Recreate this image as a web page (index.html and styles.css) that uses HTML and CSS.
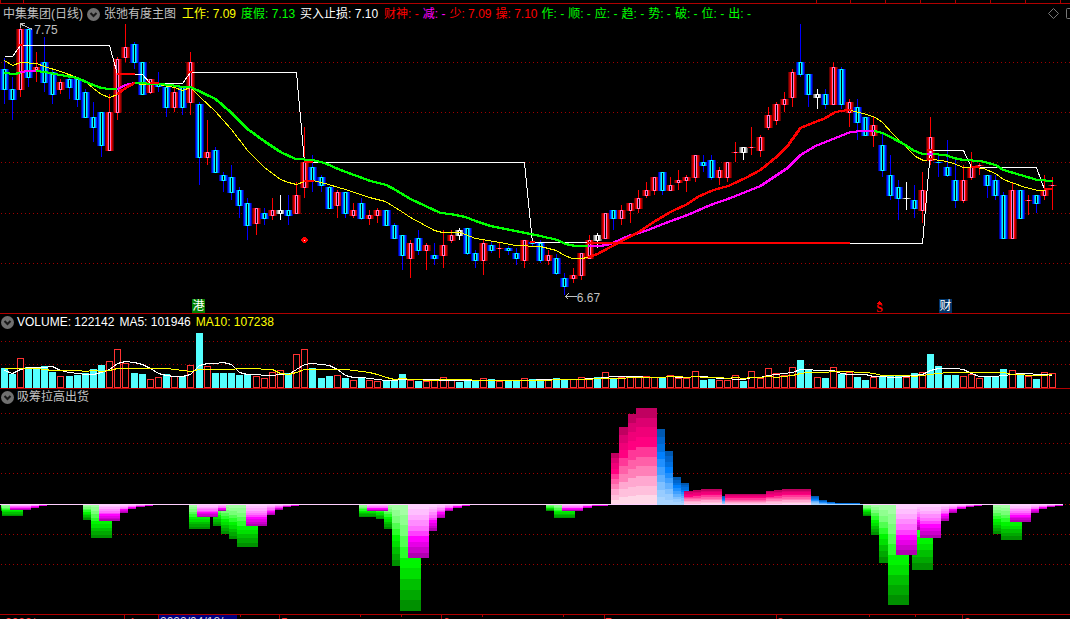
FILE: index.html
```html
<!DOCTYPE html>
<html lang="zh-CN">
<head>
<meta charset="utf-8">
<title>中集集团(日线)</title>
<link rel="stylesheet" href="styles.css">
</head>
<body>
<main class="terminal">
  <div class="ruler"><svg class="plot" id="ruler" viewBox="0 0 1070 3" preserveAspectRatio="none"></svg></div>

  <section class="panel">
    <svg class="plot" id="price" viewBox="0 4 1070 309" preserveAspectRatio="none"></svg>
    <header class="legend legend-main">
      <div class="group">
        <span class="stock">中集集团(日线)</span>
        <button class="toggle" aria-label="主图指标"><svg viewBox="0 0 13 13"><circle cx="6.500" cy="6.500" r="6.500"/><path d="M3.500 5l3 3 3-3"/></svg></button>
        <span class="title">张弛有度主图</span>
      </div>
      <div class="group wide">
        <span class="yellow">工作: 7.09</span><span class="green">度假: 7.13</span><span class="white">买入止损: 7.10</span>
      </div>
      <div class="group">
        <span class="red">财神: -</span><span class="magenta">减: -</span><span class="red">少: 7.09</span><span class="red">操: 7.10</span><span class="green">作: -</span><span class="green">顺: -</span><span class="green">应: -</span><span class="green">趋: -</span><span class="green">势: -</span><span class="green">破: -</span><span class="green">位: -</span><span class="green">出: -</span>
      </div>
    </header>
    <div class="tools">
      <button class="tool" aria-label="标记"><svg viewBox="0 0 11 11"><path d="M5.500 .5l5 5-5 5-5-5z"/></svg></button>
      <button class="tool" aria-label="窗口"><svg viewBox="0 0 11 11"><rect x=".5" y=".5" width="10" height="10" rx="1"/></svg></button>
    </div>
    <span class="price high">7.75</span>
    <span class="price low">6.67</span>
    <span class="badge hk">港</span>
    <span class="badge fin">财</span>
    <span class="dividend">S</span>
  </section>

  <section class="panel">
    <svg class="plot" id="volume" viewBox="0 314 1070 74" preserveAspectRatio="none"></svg>
    <header class="legend">
      <button class="toggle" aria-label="成交量指标"><svg viewBox="0 0 13 13"><circle cx="6.500" cy="6.500" r="6.500"/><path d="M3.500 5l3 3 3-3"/></svg></button>
      <div class="group wide"><span class="white">VOLUME: 122142</span><span class="white">MA5: 101946</span><span class="yellow">MA10: 107238</span></div>
    </header>
  </section>

  <section class="panel">
    <svg class="plot" id="flow" viewBox="0 389 1070 225" preserveAspectRatio="none"></svg>
    <header class="legend">
      <button class="toggle" aria-label="副图指标"><svg viewBox="0 0 13 13"><circle cx="6.500" cy="6.500" r="6.500"/><path d="M3.500 5l3 3 3-3"/></svg></button>
      <span class="title">吸筹拉高出货</span>
    </header>
  </section>

  <footer class="axis" id="axis">
    <svg class="plot" id="ticks" viewBox="0 615 1070 4" preserveAspectRatio="none"></svg>
  </footer>
</main>
<script src="chart.js"></script>
</body>
</html>
```
FILE: styles.css
```css
* {
  box-sizing: border-box;
}

body {
  margin: 0;
  background: #000;
  color: #c0c0c0;
  font: 12px/16px "Liberation Sans", "Noto Sans CJK SC", sans-serif;
}

.terminal {
  display: grid;
  grid-template-rows: 4px 310fr 75fr 226fr 4px;
  height: 100vh;
  overflow: hidden;
}

.ruler,
.panel {
  position: relative;
  min-height: 0;
  border-bottom: 1px solid #b00000;
  overflow: hidden;
}

.plot {
  display: block;
  width: 100%;
  height: 100%;
  shape-rendering: crispEdges;
}

.legend {
  position: absolute;
  top: 0;
  left: 1px;
  display: flex;
  align-items: center;
  gap: 3px;
  height: 16px;
  white-space: nowrap;
}

.legend-main {
  left: 3px;
  gap: 6px;
  height: 20px;
}

.group {
  display: flex;
  align-items: center;
  gap: 4px;
}

.group.wide {
  gap: 5px;
}

button {
  padding: 0;
  border: 0;
  background: none;
}

.toggle {
  width: 13px;
  height: 13px;
}

.toggle svg,
.tool svg {
  display: block;
  width: 100%;
  height: 100%;
}

.toggle circle {
  fill: #707070;
}

.toggle path {
  fill: none;
  stroke: #181818;
  stroke-width: 2;
}

.tools {
  position: absolute;
  top: 4px;
  right: -7px;
  display: flex;
  gap: 7px;
}

.tool {
  width: 11px;
  height: 11px;
}

.tool path,
.tool rect {
  fill: none;
  stroke: #787878;
}

.white { color: #fff; }
.yellow { color: #ff0; }
.green { color: #0f0; }
.red { color: #f00; }
.magenta { color: #f0f; }

.price,
.badge,
.dividend {
  position: absolute;
}

.price.high {
  left: 3.2%;
  top: 18px;
}

.price.low {
  left: 53.9%;
  bottom: 7px;
}

.badge {
  bottom: 0;
  width: 13px;
  height: 14px;
  color: #fff;
  line-height: 14px;
  text-align: center;
}

.badge.hk {
  left: 17.95%;
  background: #008000;
}

.badge.fin {
  left: 87.75%;
  background: #003468;
}

.dividend {
  left: 81.9%;
  bottom: -1px;
  color: #f00;
  font: bold 12px/12px "Liberation Serif", serif;
}

.axis {
  position: relative;
  overflow: hidden;
}

.date {
  position: absolute;
  top: 0;
  color: #f33;
  line-height: 16px;
}

.date.current {
  top: -1px;
  width: 78px;
  padding-left: 1px;
  background: #000080;
  color: #d8d8d8;
}
```
FILE: chart.js
```js
const NS = "http://www.w3.org/2000/svg";
const byId = (id) => document.getElementById(id);

function add(svg, name, attrs) {
  const el = document.createElementNS(NS, name);
  for (const key in attrs) el.setAttribute(key, attrs[key]);
  svg.appendChild(el);
}
function rect(svg, x, y, w, h, fill) {
  add(svg, "rect", { x, y, width: w, height: h, fill });
}
/* two-pixel lines are drawn with a square pen: a second pass one pixel to the right */
function line(svg, stroke, width, points) {
  const off = width % 2 ? 0.5 : 0;
  for (let pass = 0; pass < width; pass++) {
    const list = points.trim().split(/\s+/).map((p) => {
      const [x, y] = p.split(",").map(Number);
      return (x + off + pass) + "," + (y + off);
    });
    add(svg, "polyline", { points: list.join(" "), fill: "none", stroke, "stroke-width": width });
  }
}
function grid(svg, rows, from = 1) {
  for (const y of rows) {
    add(svg, "line", { x1: from, x2: 1070, y1: y + 0.5, y2: y + 0.5, stroke: "#a00000", "stroke-dasharray": "1 3" });
  }
}
const xOf = (i) => Math.floor(4 + i * 8.13);

/* top ruler */
for (const x of [0, 23, 816, 850, 885, 920, 955, 990, 1025, 1060]) rect(byId("ruler"), x, 0, 1, 3, "#b00000");

/* candles: kind, high, body top, body bottom, low */
const candles = `b58,69,90,104 b77,89,100,120 r27,29,90,97 b28,29,78,87 r52,67,70,82 b37,62,83,92 b70,72,95,104 r79,82,90,94
b78,79,88,99 b77,79,100,107 b89,92,118,118 b102,117,128,142 b112,112,146,157 r94,112,151,151 r57,59,113,120 r24,47,58,62
b42,44,63,69 b62,62,95,95 r79,79,93,94 b72,84,87,92 b87,87,108,117 r88,92,108,112 b86,86,108,115 r52,62,103,115
b102,104,158,185 r120,152,158,165 b147,150,173,173 b172,175,181,192 b165,177,193,200 b187,190,206,218 b198,203,226,240
r208,208,224,235 b208,213,219,225 r198,210,216,220 w195,210,214,220 b195,210,216,225 r182,195,214,214 r127,162,188,198
b155,167,181,192 b175,177,186,192 b186,187,209,209 r190,192,206,218 b192,192,214,218 r203,210,216,218 b198,203,219,220
r210,215,219,225 r208,210,216,223 b210,210,226,226 b223,225,239,239 b235,235,256,270 r240,243,259,278 b230,238,251,255
r243,245,251,270 b243,255,259,265 r230,245,256,268 r230,235,241,243 w228,230,236,240 b228,228,254,255 b250,253,261,268
r240,243,261,275 b242,245,251,253 r243,248,249,258 b246,248,251,255 b248,253,259,265 r240,240,261,268 b238,242,244,247
b240,243,261,263 r250,255,261,265 b254,258,274,275 b273,278,287,295 r268,275,279,283 r253,253,276,280 r235,240,259,259
w233,235,241,248 r213,213,239,239 b210,210,219,230 r205,210,219,225 r203,203,211,223 r190,198,209,213 r182,190,196,198
r177,177,191,195 b172,172,191,195 r177,185,191,191 r170,180,183,190 r175,177,181,192 r155,155,178,182 b155,162,166,172
b155,160,178,180 r167,170,178,185 r162,162,178,182 r142,152,153,162 w147,147,153,160 r127,147,148,155 r135,137,151,157
r107,115,128,130 r102,104,121,125 r92,99,105,112 r69,72,98,107 b24,62,75,77 b74,74,95,107 w89,94,98,109 b89,94,105,109
r62,67,105,105 b67,69,105,109 r99,102,113,127 b99,107,123,140 b117,117,136,136 r117,125,136,147 b134,145,171,177
b155,175,196,200 b180,187,199,220 w182,198,199,210 b185,200,209,218 r172,190,211,223 r117,137,161,165 b153,162,163,177
b140,167,176,177 b158,180,201,208 r165,180,201,203 r152,167,178,180 r163,165,166,175 b175,175,186,198 b175,180,196,200
b192,195,239,239 r183,190,239,239 b190,190,219,219 r195,200,201,215 b195,195,204,213 r175,190,196,200 r177,185,186,210`.split(/\s+/);
const tones = {
  r: ["#600000", "#a80000", "#ff0000", "#ff78c8"],
  b: ["#0000a0", "#0020ff", "#0090ff", "#00ffff"],
  w: ["#606060", "#a0a0a0", "#d8d8d8", "#ffffff"]
};
const wicks = { r: "#ff0000", b: "#0000ff", w: "#ffffff" };
const price = byId("price");
grid(price, [62, 112, 162, 213, 263]);
candles.forEach((text, i) => {
  const kind = text[0];
  const [high, top, bottom, low] = text.slice(1).split(",").map(Number);
  const x = xOf(i);
  rect(price, x, high, 1, low - high, wicks[kind]);
  tones[kind].forEach((tone, n) => rect(price, x - 4 + n, top, 9 - n * 2, bottom - top, tone));
  if (bottom - top > 2) rect(price, x, top + 1, 1, bottom - top - 2, "#000");
});

/* trend and stop lines */
const RED = "#ff0000", GREEN = "#00ff00", PINK = "#ff00ff", YELLOW = "#ffff00";
line(price, "#fff", 1, "4,56 12,56 20,45 109,45 117,74 142,74 150,83 182,83 190,72 296,72 304,162 524,162 532,242 590,242 850,243 922,243 930,150 963,150 971,167 1036,167 1044,189");
line(price, YELLOW, 1, "4,60 12,65 20,62 36,63 44,66 60,71 77,77 85,81 93,88 101,94 109,97 117,94");
line(price, YELLOW, 1, "134,83 142,84 158,84 174,87 182,90 190,87 199,96 215,111 231,129 247,150 264,167 280,179 288,182 296,184 304,181");
line(price, YELLOW, 1, "312,180 321,182 345,189 369,197 385,201 401,211 410,217 434,230 442,232 460,232 475,238 500,242 515,245 540,246 556,250 564,255 572,258 582,258 590,256");
line(price, YELLOW, 1, "850,110 863,113 875,117 882,122 892,133 907,148 915,156 923,160 930,159 942,160 953,163 963,167 973,167 983,168 995,173 1003,179 1022,186 1037,190 1044,190");
line(price, GREEN, 2, "4,73 13,74 20,73");
line(price, PINK, 2, "20,72 28,71 37,71");
line(price, GREEN, 2, "36,71 44,72 60,75 77,78 90,84 101,88 109,89 117,89");
line(price, PINK, 2, "117,89 125,85 134,83");
line(price, GREEN, 2, "134,83 158,84 170,85 182,87 190,87 215,99 230,112 247,129 265,142 280,152 295,159 312,160 324,163 340,170 370,181 386,185 395,190 410,199 425,206 440,213 450,214 465,217 475,221 490,226 520,232 540,236 557,240 565,244 575,246 590,246");
line(price, PINK, 2, "588,246 600,246 610,244 628,236 645,231 665,223 687,215 710,205 730,198 760,186 787,168 800,155 815,146 830,140 850,132 863,131 875,131");
line(price, GREEN, 2, "874,131 882,133 890,137 905,145 912,150 922,154 930,154 945,155 953,158 963,160 980,161 995,165 1003,170 1020,175 1037,180 1052,181");
line(price, RED, 2, "117,94 125,88 134,83");
line(price, RED, 2, "304,181 313,181");
line(price, RED, 2, "588,257 597,254 610,247 627,238 640,231 653,222 670,212 687,204 697,197 713,190 728,186 747,177 760,170 777,156 787,146 800,128 817,121 823,119 835,112 847,110 850,110");
for (const [x, y, w] of [[18, 44, 5], [117, 73, 18], [150, 82, 9], [188, 71, 4], [304, 161, 9], [530, 241, 5], [587, 242, 263], [927, 149, 6], [927, 158, 6], [971, 166, 9], [1044, 188, 9]]) {
  rect(price, x, y, w, 2, RED);
}
rect(price, 927, 153, 6, 2, PINK);

/* extreme pointers and event marks */
line(price, "#c0c0c0", 1, "24,23 20,23 20,27");
line(price, "#c0c0c0", 1, "21,24 32,29");
line(price, "#c0c0c0", 1, "565,296 576,296");
line(price, "#c0c0c0", 1, "568,293 565,296 568,299");
add(price, "path", { d: "M303 237h3v1h1v1h1v2h-1v1h-1v1h-3v-1h-1v-1h-1v-2h1v-1h1z", fill: RED });
rect(price, 304, 240, 1, 1, "#fff");
add(price, "path", { d: "M879 301h1v1h1v1h1v1h-5v-1h1v-1h1z", fill: RED });

/* volume: kind and bar top */
const volumes = `b368 b374 r358 b367 b369 b366 b372 r376 b376 b375 b373 b369 b365 r361 r349 r363 b373 b374 r379 r377 b374 r376 b376 r365 b333 r366
b373 b373 b373 b375 b374 r376 r378 r372 r370 b373 r354 r349 b368 b378 b376 r375 b378 r380 b378 r380 r381 b380 b380 b374 r380 b381
r381 r380 r377 r379 b382 b380 b381 r378 b379 r381 b380 b380 r378 b379 b379 r380 b378 b379 r379 r377 r378 b377 r372 b378 r377 r377
r377 r376 r377 b377 r375 r378 r378 r371 b380 b379 r380 r380 r375 b381 r371 r378 r368 r373 r375 r367 b360 b369 r377 b378 r367 b374
r372 b377 b380 r377 b376 b375 b375 r377 b373 r372 b354 b366 b375 b375 r376 r374 r378 b376 b376 b369 r370 b375 r376 b379 r372 r373`.split(/\s+/);
const volume = byId("volume");
grid(volume, [341, 364]);
const tops = volumes.map((v) => +v.slice(1));
volumes.forEach((v, i) => {
  const x = xOf(i) - 3, y = tops[i];
  if (v[0] === "b") rect(volume, x, y, 7, 388 - y, "#54ffff");
  else add(volume, "rect", { x: x + 0.5, y: y + 0.5, width: 6, height: 387 - y, fill: "#000", stroke: "#ff3232" });
});
function average(period, lead) {
  const points = [lead];
  for (let i = period - 1; i < tops.length; i++) {
    const sum = tops.slice(i - period + 1, i + 1).reduce((a, b) => a + b, 0);
    points.push(xOf(i) + "," + Math.round(sum / period));
  }
  return points.join(" ");
}
line(volume, "#fff", 1, average(5, "4,370 12,373 20,369 28,367"));
line(volume, YELLOW, 1, average(10, "4,368 36,368 52,370 69,370"));

/* flow: ramp, left, right, tip */
const ramps = {
  g: ["#a5ffa5", "#90ff90", "#78ff78", "#50ff50", "#28ff28", "#00f500", "#00e000", "#00c000", "#00a800", "#009000"],
  m: ["#ffd0ff", "#ffbfff", "#ffaaff", "#ff8cff", "#ff70ff", "#ff40ff", "#ff00ff", "#e600e6", "#cc00cc", "#b000b0"],
  p: ["#ffd8e8", "#ffc0dc", "#ffa8d0", "#ff80b8", "#ff60a8", "#ff3898", "#ff0080", "#f00078", "#dc0070", "#c00060"],
  c: ["#a8d4ff", "#98ccff", "#80c0ff", "#60b0ff", "#40a0ff", "#2090ff", "#0080ff", "#0070e0", "#0064cc", "#0058b0"]
};
const columns = `g1,10,511 g2,23,516 m10,31,510 m31,39,508 m39,47,506
g83,91,520 g91,112,538 m99,120,521 m120,128,513 m128,136,509 m136,145,507 m145,153,506
g189,210,529 g213,221,526 g221,229,534 m197,218,517 m218,226,511 g229,237,539 g237,258,547 m246,267,526 m267,275,515 m275,283,510 m283,291,507 m291,299,506
g359,376,517 g376,384,519 g384,392,529 m367,388,511 g392,400,566 g400,421,611 m408,429,558 m429,437,531 m437,445,518 m445,453,511 m453,462,508 m462,470,506
g546,554,511 g554,575,518 m562,583,511 m583,592,508 m592,608,506
p611,619,453 p619,628,427 p628,636,414 p636,657,408 c657,665,429 c665,673,451 c673,681,477 c681,689,483
p684,693,491 p693,701,490 p701,722,489 c722,725,496 p725,766,494 p766,774,491 p774,782,490 p782,811,489
c811,819,496 c819,827,500 c827,835,502 c835,860,503
g863,871,516 g871,879,535 g879,888,563 g888,909,605 g912,933,570 m896,917,555 m917,920,530 m920,941,538 m941,949,521 m949,957,513 m957,966,509 m966,974,507 m974,982,506
g993,1001,534 g1001,1022,540 m1010,1031,522 m1031,1039,513 m1039,1047,509 m1047,1055,507 m1055,1063,506`.split(/\s+/);
const flow = byId("flow");
grid(flow, [413, 443, 473, 504, 534, 564]);
for (const text of columns) {
  const [left, right, tip] = text.slice(1).split(",").map(Number);
  const base = tip > 504 ? 504 : 505;
  const ramp = ramps[text[0]];
  for (let n = 0; n < 10; n++) {
    const a = Math.round(base + (tip - base) * n / 10);
    const b = Math.round(base + (tip - base) * (n + 1) / 10);
    rect(flow, left, Math.min(a, b), right - left, Math.abs(b - a), ramp[n]);
  }
}
rect(flow, 0, 504, 1063, 1, "#ffd0ff");
rect(flow, 657, 504, 27, 1, "#a8d4ff");
rect(flow, 811, 504, 52, 1, "#a8d4ff");

/* date axis */
const ticks = byId("ticks");
for (const x of [124, 158, 236, 279, 441, 604, 776, 962]) rect(ticks, x, 615, 1, 4, "#b00000");
for (const x of [240, 360, 401, 482, 563, 869, 915]) rect(ticks, x, 615, 1, 2, "#b00000");
for (const [x, label] of [[5, "2022/"], [128, "4"], [281, "5"], [443, "6"], [605, "7"], [777, "8"], [964, "9"], [159, "2022/04/18/"]]) {
  const el = document.createElement("span");
  el.className = label.length > 5 ? "date current" : "date";
  el.textContent = label;
  el.style.left = x / 10.7 + "%";
  byId("axis").appendChild(el);
}
```
